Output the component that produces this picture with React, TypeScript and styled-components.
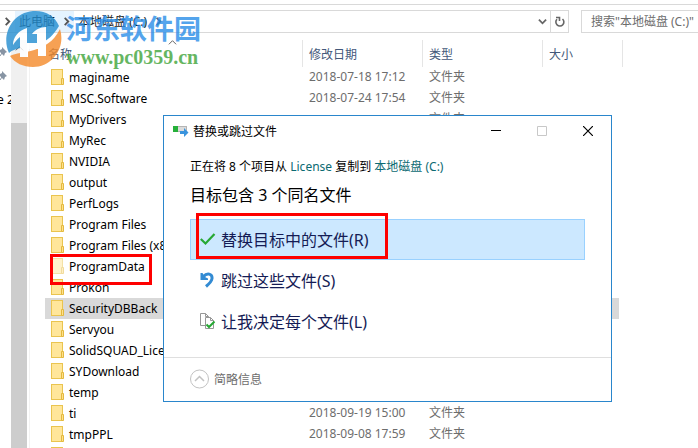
import React from "react";
import styled, { createGlobalStyle } from "styled-components";

const Global = createGlobalStyle`
  * { box-sizing: border-box; }
  html, body { margin: 0; height: 100%; overflow: hidden; background: #fff; }
  #root { height: 100%; }
  body, button, input { font-family: "Noto Sans", "Noto Sans CJK SC", sans-serif; font-size: 12px; }
  button { border: 0; padding: 0; background: none; color: inherit; }
`;

const Window = styled.div`
  position: relative;
  display: flex;
  flex-direction: column;
  height: 100%;
  overflow: hidden;
`;

const AddressRow = styled.header`
  display: flex;
  flex: none;
  gap: 12px;
  height: 36px;
  margin-top: 4px;
  padding-top: 5px;
  border-top: 1px solid #d9d9d9;
`;

const AddressBar = styled.nav`
  display: flex;
  flex: 1;
  align-items: center;
  height: 23px;
  border: 1px solid #d9d9d9;
  border-left: 0;
`;

const Crumb = styled.a<{ $active?: boolean }>`
  display: flex;
  align-items: center;
  height: 21px;
  padding: 0 4px 2px;
  color: #1a1a1a;
  white-space: nowrap;
  text-decoration: none;
  background: ${(p) => (p.$active ? "#e5f3ff" : "transparent")};
`;

const CrumbArrow = styled.span<{ $active?: boolean }>`
  display: flex;
  align-items: center;
  justify-content: center;
  width: 15px;
  height: 21px;
  background: ${(p) => (p.$active ? "#e5f3ff" : "transparent")};
`;

const BarSpacer = styled.span`
  flex: 1;
`;

const BarButton = styled.button<{ $divided?: boolean }>`
  display: flex;
  align-items: center;
  justify-content: center;
  width: ${(p) => (p.$divided ? 18 : 16)}px;
  height: 21px;
  border-left: ${(p) => (p.$divided ? "1px solid #d9d9d9" : "0")};
`;

const Search = styled.input`
  flex: none;
  width: 117px;
  height: 23px;
  padding: 0 0 0 9px;
  border: 1px solid #d9d9d9;
  border-right: 0;
  color: #6d6d6d;
  outline: 0;
  &::placeholder { color: #6d6d6d; opacity: 1; }
`;

const Main = styled.div`
  display: flex;
  flex: 1;
  min-height: 0;
`;

const NavPane = styled.aside`
  display: flex;
  flex: none;
  flex-direction: column;
  gap: 8px;
  width: 11px;
  padding-top: 4px;
  overflow: hidden;
  line-height: 16px;
  white-space: nowrap;
  svg { flex: none; }
`;

const NavLabel = styled.span`
  margin-left: -3px;
`;

const ScrollTrack = styled.div`
  display: flex;
  flex: none;
  flex-direction: column;
  width: 16px;
  background: #f0f0f0;
`;

const ScrollUp = styled.button`
  display: flex;
  align-items: center;
  justify-content: center;
  height: 17px;
`;

const ScrollThumb = styled.div`
  flex: 1;
  margin-top: 66px;
  background: #cdcdcd;
`;

const FilePane = styled.main`
  flex: 1;
  min-width: 0;
  margin-left: 2px;
  padding-left: 15px;
  border-left: 1px solid #f2f2f2;
  overflow: hidden;
`;

const FileTable = styled.table`
  width: 578px;
  border-collapse: separate;
  border-spacing: 0;
  table-layout: fixed;
`;

const HeadCell = styled.th<{ $width: number }>`
  width: ${(p) => p.$width}px;
  height: 27px;
  padding: 0 0 0 6px;
  border-right: 1px solid #e5e5e5;
  color: #43587a;
  font-weight: 400;
  text-align: left;
  &:first-child { padding-left: 3px; }
`;

const FileRow = styled.tr<{ $selected?: boolean }>`
  height: 21px;
  background: ${(p) => (p.$selected ? "#d9d9d9" : "transparent")};
`;

const FileCell = styled.td`
  height: 21px;
  padding: 0 0 0 6px;
  color: #6d6d6d;
  line-height: 20px;
  white-space: nowrap;
  vertical-align: top;
  &:last-child { border-right: 4px solid #fff; }
`;

const NameCell = styled(FileCell)`
  color: #000;
`;

const NameFlex = styled.span<{ $faded?: boolean }>`
  display: flex;
  align-items: center;
  gap: 4px;
  height: 21px;
  svg { flex: none; opacity: ${(p) => (p.$faded ? 0.5 : 1)}; }
`;

const Dialog = styled.section`
  position: absolute;
  left: 163px;
  top: 115px;
  width: 449px;
  border: 1px solid #2a86cc;
  background: #fff;
`;

const TitleBar = styled.div`
  display: flex;
  align-items: center;
  height: 30px;
  padding-left: 9px;
`;

const Title = styled.h1`
  flex: 1;
  margin: 0 0 0 4px;
  padding-bottom: 1px;
  font-size: 12px;
  font-weight: 400;
`;

const CaptionButton = styled.button`
  display: flex;
  align-items: center;
  justify-content: center;
  width: 46px;
  height: 29px;
`;

const DialogBody = styled.div`
  padding: 10px 26px 15px;
`;

const Progress = styled.p`
  margin: 0;
  line-height: 22px;
  a { color: #0b6a72; text-decoration: none; }
`;

const Heading = styled.h2`
  margin: 0;
  padding: 5px 0 11px;
  font-size: 16px;
  font-weight: 400;
  line-height: 25px;
`;

const Choice = styled.button<{ $active?: boolean }>`
  display: flex;
  align-items: center;
  gap: 4px;
  width: 100%;
  height: 41px;
  padding: 0 0 2px 9px;
  border: 1px solid ${(p) => (p.$active ? "#99d1ff" : "transparent")};
  background: ${(p) => (p.$active ? "#cce8ff" : "transparent")};
  color: #151c55;
  font-size: 16px;
`;

const DialogFooter = styled.div`
  display: flex;
  align-items: center;
  height: 44px;
  padding: 0 0 2px 26px;
  border-top: 1px solid #dfdfdf;
`;

const LessButton = styled.button`
  display: flex;
  align-items: center;
  gap: 4px;
  color: #6d6d6d;
`;

const Marker = styled.div<{ $x: number; $y: number; $w: number; $h: number }>`
  position: absolute;
  left: ${(p) => p.$x}px;
  top: ${(p) => p.$y}px;
  width: ${(p) => p.$w}px;
  height: ${(p) => p.$h}px;
  border: 3px solid #fe0000;
  pointer-events: none;
`;

const SortMark = styled.div`
  position: absolute;
  left: 168px;
  top: 38px;
  display: flex;
`;

const Watermark = styled.div`
  position: absolute;
  left: 4px;
  top: 10px;
  display: flex;
  gap: 4px;
  opacity: 0.8;
  pointer-events: none;
`;

const WatermarkText = styled.div`
  display: flex;
  flex-direction: column;
  white-space: nowrap;
`;

const SiteName = styled.span`
  color: #2a8ee8;
  font-family: "Noto Sans CJK SC", sans-serif;
  font-size: 27px;
  font-weight: 700;
  line-height: 36px;
`;

const SiteUrl = styled.span`
  color: #3fa53a;
  font-family: "Liberation Serif", serif;
  font-size: 20px;
  font-weight: 700;
  line-height: 22px;
`;

const Chevron = ({ d, size = 9, color = "#555", width = 1 }: { d: string; size?: number; color?: string; width?: number }) => (
  <svg width={size} height={size} viewBox="0 0 10 10" fill="none" stroke={color} strokeWidth={width}>
    <path d={d} />
  </svg>
);
const RIGHT = "M3 1L7 5L3 9";
const UP = "M1 7L5 3L9 7";
const DOWN = "M1 3L5 7L9 3";

const Folder = () => (
  <svg width="14" height="17" viewBox="0 0 14 17">
    <rect x="0.5" y="0.5" width="11" height="15" fill="#ffe69a" stroke="#eac44f" />
    <path d="M10.5 9.5h2v6h-2z" fill="#ffe08a" stroke="#e3b93f" />
  </svg>
);

const Pin = () => (
  <svg width="7" height="16" viewBox="0 0 7 16">
    <path d="M2 3L7 8L5 9L4 12L0 8V6L2 5Z" fill="#8794a3" />
    <path d="M2 9L0 12" stroke="#8794a3" />
  </svg>
);

const TransferIcon = () => (
  <svg width="16" height="14" viewBox="0 0 16 14">
    <rect x="0.5" y="2.5" width="13" height="5" fill="#dcdcdc" stroke="#b5b5b5" />
    <rect x="0" y="2" width="5" height="6" fill="#26b03a" />
    <path d="M7 7h4V4l4.500 4.500L11 13v-3H7z" fill="#3a94dd" />
  </svg>
);

const CheckIcon = () => (
  <svg width="17" height="16" viewBox="0 0 17 16" fill="none" stroke="#27a834" strokeWidth="2.200">
    <path d="M0.800 8L5.500 12.500L14.500 3" />
  </svg>
);

const UndoIcon = () => (
  <svg width="17" height="16" viewBox="0 0 17 16" fill="none">
    <path d="M3.500 4.500C7 0.500 12.500 1.500 12 6.500C11.800 9.500 9.500 11.500 6 14.500" stroke="#338bd3" strokeWidth="3" />
    <path d="M0.500 1V8H8V6.500L5 5L2.500 1Z" fill="#338bd3" />
  </svg>
);

const FilesIcon = () => (
  <svg width="17" height="18" viewBox="0 0 17 18" fill="#fff" stroke="#979797">
    <path d="M0.500 1.500h5l3 3v9h-8z" />
    <path d="M5.500 5.500h5l3 3v8h-8z" />
    <path d="M5.500 1.500v3h3M10.500 5.500v3h3" fill="none" />
    <path d="M6.500 12.500L9 15L14.500 9.500" fill="none" stroke="#27a834" strokeWidth="2" />
  </svg>
);

const SiteLogo = () => (
  <svg width="58" height="58" viewBox="0 0 58 58">
    <path d="M5 43C-3 26 7 3 29 1C41 0 51 6 55 16C50 24 44 31 35 34C24 38 11 37 5 43Z" fill="#238dd0" />
    <path d="M56 19C62 38 48 57 29 57C19 57 11 53 6 46C17 40 43 45 56 19Z" fill="#f58a2a" />
    <path d="M9 35C9 27 14 21 23 18V33H33V24H28C31 20 36 17 42 17V46H34V39H24V47H16V27C13 29 11 32 9 35Z" fill="#fff" />
  </svg>
);

type Entry = { name: string; date?: string; kind?: string; faded?: boolean; selected?: boolean };
const KIND = "文件夹";
const entries: Entry[] = [
  { name: "maginame", date: "2018-07-18 17:12", kind: KIND },
  { name: "MSC.Software", date: "2018-07-24 17:54", kind: KIND },
  { name: "MyDrivers", kind: KIND },
  { name: "MyRec" },
  { name: "NVIDIA" },
  { name: "output" },
  { name: "PerfLogs" },
  { name: "Program Files" },
  { name: "Program Files (x86)" },
  { name: "ProgramData", faded: true },
  { name: "Prokon" },
  { name: "SecurityDBBack", selected: true },
  { name: "Servyou" },
  { name: "SolidSQUAD_License" },
  { name: "SYDownload" },
  { name: "temp" },
  { name: "ti", date: "2018-09-19 15:00", kind: KIND },
  { name: "tmpPPL", date: "2018-09-08 17:59", kind: KIND },
  { name: "" },
];

export default function App() {
  return (
    <Window>
      <Global />
      <AddressRow>
        <AddressBar aria-label="地址">
          <CrumbArrow><Chevron d={RIGHT} width={2} /></CrumbArrow>
          <Crumb href="#pc" $active>此电脑</Crumb>
          <CrumbArrow $active><Chevron d={RIGHT} width={2} /></CrumbArrow>
          <Crumb href="#c">本地磁盘 (C:)</Crumb>
          <CrumbArrow><Chevron d={RIGHT} width={2} /></CrumbArrow>
          <BarSpacer />
          <BarButton aria-label="展开"><Chevron d={DOWN} width={2} color="#666" /></BarButton>
          <BarButton aria-label="刷新" $divided>
            <svg width="12" height="12" viewBox="0 0 12 12" fill="none" stroke="#666" strokeWidth="1.600">
              <path d="M8.500 3A4 4 0 1 1 3 3.200M2 1.500H5.500V5" />
            </svg>
          </BarButton>
        </AddressBar>
        <Search aria-label="搜索" placeholder={'搜索"本地磁盘 (C:)"'} />
      </AddressRow>
      <Main>
        <NavPane>
          <Pin />
          <Pin />
          <NavLabel>e 2</NavLabel>
        </NavPane>
        <ScrollTrack>
          <ScrollUp aria-label="向上滚动"><Chevron d={UP} /></ScrollUp>
          <ScrollThumb />
        </ScrollTrack>
        <FilePane>
          <FileTable>
            <thead>
              <tr>
                <HeadCell $width={258}>名称</HeadCell>
                <HeadCell $width={120}>修改日期</HeadCell>
                <HeadCell $width={120}>类型</HeadCell>
                <HeadCell $width={80}>大小</HeadCell>
              </tr>
            </thead>
            <tbody>
              {entries.map((e) => (
                <FileRow key={e.name} $selected={e.selected}>
                  <NameCell>
                    <NameFlex $faded={e.faded}><Folder />{e.name}</NameFlex>
                  </NameCell>
                  <FileCell>{e.date}</FileCell>
                  <FileCell>{e.kind}</FileCell>
                  <FileCell />
                </FileRow>
              ))}
            </tbody>
          </FileTable>
        </FilePane>
      </Main>
      <SortMark><Chevron d={UP} /></SortMark>
      <Marker $x={50} $y={254} $w={102} $h={31} />
      <Dialog role="dialog" aria-label="替换或跳过文件">
        <TitleBar>
          <TransferIcon />
          <Title>替换或跳过文件</Title>
          <CaptionButton aria-label="最小化">
            <svg width="10" height="10"><path d="M0 4.500H10" stroke="#000" /></svg>
          </CaptionButton>
          <CaptionButton aria-label="最大化" disabled>
            <svg width="10" height="10"><path d="M0.500 0.500H9.500V9.500H0.500Z" fill="none" stroke="#c8c8c8" /></svg>
          </CaptionButton>
          <CaptionButton aria-label="关闭">
            <svg width="10" height="10"><path d="M0 0L10 10M10 0L0 10" stroke="#000" strokeWidth="1.200" /></svg>
          </CaptionButton>
        </TitleBar>
        <DialogBody>
          <Progress>
            正在将 8 个项目从 <a href="#src">License</a> 复制到 <a href="#dst">本地磁盘 (C:)</a>
          </Progress>
          <Heading>目标包含 3 个同名文件</Heading>
          <Choice $active><CheckIcon />替换目标中的文件(R)</Choice>
          <Choice><UndoIcon />跳过这些文件(S)</Choice>
          <Choice><FilesIcon />让我决定每个文件(L)</Choice>
        </DialogBody>
        <DialogFooter>
          <LessButton>
            <svg width="20" height="20" viewBox="0 0 20 20" fill="none">
              <circle cx="9.500" cy="10" r="9" stroke="#c2c2c2" />
              <path d="M5 12L9.500 7.500L14 12" stroke="#c2c2c2" strokeWidth="1.500" />
            </svg>
            简略信息
          </LessButton>
        </DialogFooter>
      </Dialog>
      <Marker $x={196} $y={213} $w={192} $h={46} />
      <Watermark>
        <SiteLogo />
        <WatermarkText>
          <SiteName>河东软件园</SiteName>
          <SiteUrl>www.pc0359.cn</SiteUrl>
        </WatermarkText>
      </Watermark>
    </Window>
  );
}
